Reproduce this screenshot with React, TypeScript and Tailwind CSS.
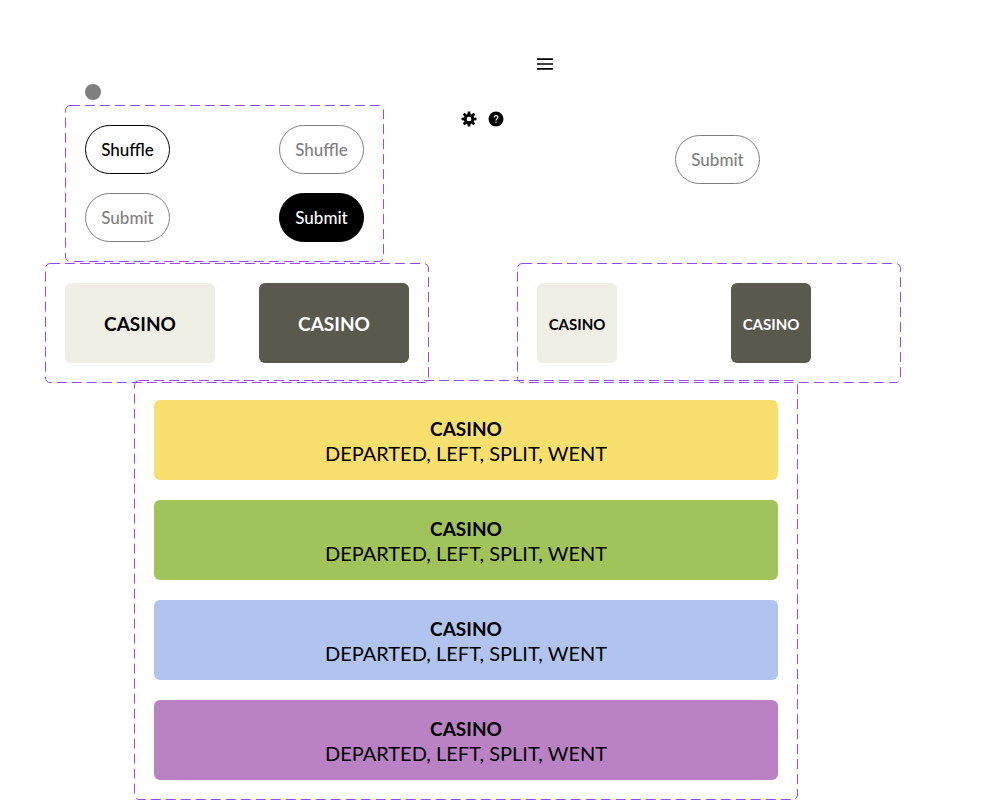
import type { ReactNode } from "react";

function Frame({ className, children }: { className: string; children: ReactNode }) {
  return (
    <section className={`relative p-5 ${className}`}>
      <svg className="pointer-events-none absolute inset-0 h-full w-full p-[0.5px]" overflow="visible" aria-hidden="true">
        <rect width="100%" height="100%" rx="4.5" fill="none" stroke="#9747FF" strokeDasharray="10 5" />
      </svg>
      {children}
    </section>
  );
}

const pillTones = {
  outline: "border-black text-black",
  disabled: "border-[#7f7f7f] text-[#7f7f7f]",
  filled: "border-black bg-black text-white",
};

function Pill({ label, tone }: { label: string; tone: keyof typeof pillTones }) {
  return (
    <button type="button" className={`h-[49px] w-[85px] rounded-full border text-[17px] font-medium ${pillTones[tone]}`}>
      {label}
    </button>
  );
}

function Tile({ selected = false, small = false }: { selected?: boolean; small?: boolean }) {
  return (
    <button
      type="button"
      className={`h-20 rounded-md pt-0.5 font-bold ${small ? "w-20 text-[15px]" : "w-[150px] text-[19px]"} ${selected ? "bg-[#5a594e] text-white" : "bg-[#efefe6] text-black"}`}
    >
      CASINO
    </button>
  );
}

const groups = [
  { id: "yellow", color: "bg-[#f9df6d]" },
  { id: "green", color: "bg-[#a0c35a]" },
  { id: "blue", color: "bg-[#b0c4ef]" },
  { id: "purple", color: "bg-[#ba81c5]" },
];

const toothAngles = [0, 45, 90, 135, 180, 225, 270, 315];

export default function App() {
  return (
    <main className="bg-white pl-[45px] font-['Lato','Noto_Sans',sans-serif] text-black">
      <div className="flex items-start pl-5">
        <div className="pt-[84px]">
          <div className="ml-5 size-4 rounded-full bg-[#7f7f7f]" />
          <Frame className="mt-[5px] grid grid-cols-2 gap-x-[109px] gap-y-[19px]">
            <Pill label="Shuffle" tone="outline" />
            <Pill label="Shuffle" tone="disabled" />
            <Pill label="Submit" tone="disabled" />
            <Pill label="Submit" tone="filled" />
          </Frame>
        </div>
        <div className="ml-[77px] flex w-[92px] flex-col pt-14">
          <button type="button" aria-label="Menu" className="self-end">
            <svg width="16" height="16" viewBox="0 0 16 16" aria-hidden="true">
              <path d="M0 2.3h16V4H0zM0 7.2h16v1.6H0zM0 12h16v1.7H0z" />
            </svg>
          </button>
          <div className="mt-[39px] flex gap-[11px]">
            <button type="button" aria-label="Settings">
              <svg width="16" height="16" viewBox="0 0 16 16" aria-hidden="true">
                <g transform="translate(8 8)">
                  <circle r="3.8" fill="none" stroke="black" strokeWidth="2.9" />
                  {toothAngles.map((angle) => (
                    <path key={angle} d="M-1.6-4.8L-1.2-7.5H1.2L1.6-4.8z" transform={`rotate(${angle})`} />
                  ))}
                </g>
              </svg>
            </button>
            <button type="button" aria-label="Help">
              <svg width="16" height="16" viewBox="0 0 16 16" aria-hidden="true">
                <circle cx="8" cy="8" r="7.5" />
                <path d="M6.2 6.4C6.2 4 9.9 4 9.9 6.2C9.9 7.6 8 7.7 8 9.5" fill="none" stroke="white" strokeWidth="1.2" />
                <circle cx="8" cy="11.3" r="0.7" fill="white" />
              </svg>
            </button>
          </div>
        </div>
        <div className="ml-[122px] pt-[135px]">
          <Pill label="Submit" tone="disabled" />
        </div>
      </div>
      <div className="mt-px flex gap-[88px]">
        <Frame className="flex gap-11">
          <Tile />
          <Tile selected />
        </Frame>
        <Frame className="grid grid-cols-[150px_150px] gap-11">
          <Tile small />
          <Tile small selected />
        </Frame>
      </div>
      <Frame className="-mt-[3px] mr-[202px] ml-[89px] flex flex-col gap-5">
        {groups.map(({ id, color }) => (
          <article key={id} className={`flex h-20 flex-col items-center justify-center rounded-md pt-0.5 text-xl leading-6 ${color}`}>
            <h2 className="text-[19px] font-bold">CASINO</h2>
            <p>DEPARTED, LEFT, SPLIT, WENT</p>
          </article>
        ))}
      </Frame>
    </main>
  );
}
